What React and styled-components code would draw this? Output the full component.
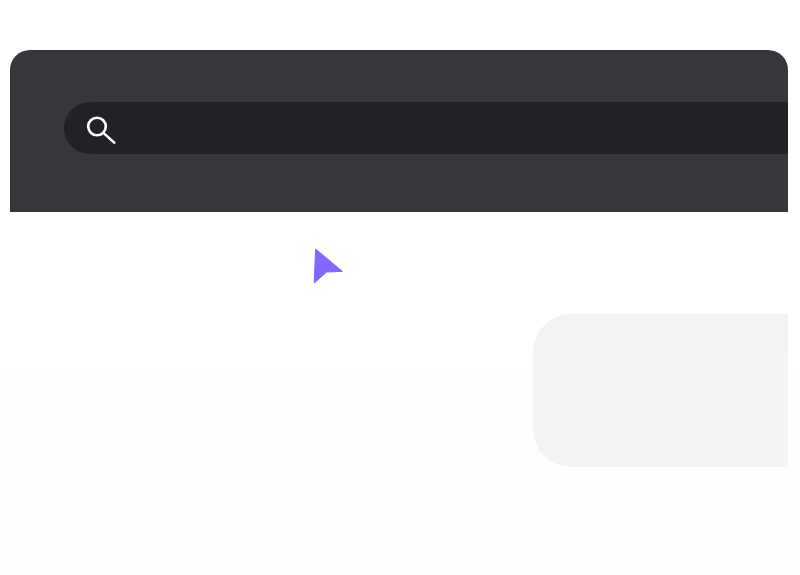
import React from "react";
import styled, { createGlobalStyle } from "styled-components";

const Global = createGlobalStyle`
  html, body { margin: 0; padding: 0; background: #fefefe; overflow: hidden; }
  body { font-family: "Inter", "Liberation Sans", sans-serif; }
`;

const Page = styled.main`
  position: relative;
  width: 800px;
  height: 575px;
  box-sizing: border-box;
  padding: 50px 12px 0 10px;
  background: linear-gradient(#ffffff, #ffffff 300px, #fefefe 420px);
`;

const Header = styled.header`
  height: 161.5px;
  box-sizing: border-box;
  padding: 52px 0 0 54px;
  background: #36373b;
  border-radius: 20px 20px 0 0;
`;

const SearchBar = styled.div`
  height: 52px;
  display: flex;
  align-items: center;
  padding-left: 22px;
  background: #212225;
  border-radius: 26px 0 0 26px;
`;

const SearchIcon = styled.svg`
  display: block;
  flex: none;
`;

const Cursor = styled.svg`
  position: absolute;
  left: 310px;
  top: 244px;
`;

const CardRow = styled.section`
  display: flex;
  justify-content: flex-end;
  margin-top: 102.5px;
`;

const Card = styled.div`
  width: 255px;
  height: 153px;
  background: #f3f3f3;
  border-radius: 38px 0 0 38px;
`;

export default function App() {
  return (
    <Page>
      <Global />
      <Header>
        <SearchBar>
          <SearchIcon width="32" height="32" viewBox="0 0 32 32" fill="none" stroke="#ffffff" strokeWidth="2.6" strokeLinecap="round" aria-label="Search">
            <circle cx="11" cy="14.5" r="8.8" />
            <path d="M17.4 20.9 L28.2 30.6" />
          </SearchIcon>
        </SearchBar>
      </Header>
      <Cursor width="40" height="46" viewBox="0 0 40 46" aria-hidden="true">
        <path d="M5.6 5 L32.4 27.4 L16.7 28 L4.2 39 Z" fill="#8467ff" stroke="#8467ff" strokeWidth="1" strokeLinejoin="round" />
      </Cursor>
      <CardRow>
        <Card />
      </CardRow>
    </Page>
  );
}
